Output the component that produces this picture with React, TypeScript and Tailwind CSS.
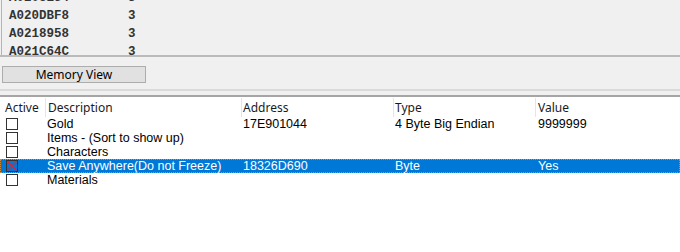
import React from "react";

const topRows = [
  ["A0208E54", "3"],
  ["A020DBF8", "3"],
  ["A0218958", "3"],
  ["A021C64C", "3"],
];

const rows = [
  { d: "Gold", a: "17E901044", t: "4 Byte Big Endian", v: "9999999" },
  { d: "Items - (Sort to show up)", a: "", t: "", v: "" },
  { d: "Characters", a: "", t: "", v: "" },
  { d: "Save Anywhere(Do not Freeze)", a: "18326D690", t: "Byte", v: "Yes", sel: true },
  { d: "Materials", a: "", t: "", v: "" },
];

export default function App() {
  return (
    <div className="w-[680px] h-[252px] bg-[#f0f0f0] flex flex-col overflow-hidden" style={{ fontFamily: "'Noto Sans', 'Liberation Sans', sans-serif" }}>
      {/* top list */}
      <div className="h-[55px] overflow-hidden ml-[1px] border-l border-[#b4b4b4] bg-[#f0f0f0]">
        <div className="mt-[-11px]">
          {topRows.map((r, i) => (
            <div key={i} className="h-[18px] flex items-center text-[12.5px] text-[#333] font-bold" style={{ fontFamily: "'Liberation Mono', 'Courier New', monospace" }}>
              <span className="w-[126px] pl-[7px]">{r[0]}</span>
              <span>{r[1]}</span>
            </div>
          ))}
        </div>
      </div>
      <div className="h-[2px] bg-[#bababa]" />
      {/* button area */}
      <div className="h-[32px] flex flex-col">
        <div className="mt-[9px] ml-[2px] w-[144px] h-[17px] bg-[#e1e1e1] border border-[#adadad] flex items-center justify-center text-[12px] text-black leading-none">
          Memory View
        </div>
      </div>
      <div className="h-[2px] bg-[#dadada]" />
      <div className="h-[4px]" />
      <div className="h-[2px] bg-[#a5a5a5]" />
      {/* bottom list */}
      <div className="flex-1 bg-white flex flex-col">
        <div className="h-[20px] flex text-[12px] text-[#1a1a1a] items-center pt-[1px]">
          <div className="w-[46px] pl-[5px] h-full flex items-center border-r border-[#e5e5e5]">Active</div>
          <div className="w-[196px] pl-[2px] h-full flex items-center border-r border-[#e5e5e5]">Description</div>
          <div className="w-[152px] pl-[1px] h-full flex items-center border-r border-[#e5e5e5]">Address</div>
          <div className="w-[142px] pl-[1px] h-full flex items-center border-r border-[#e5e5e5]">Type</div>
          <div className="flex-1 pl-[2px] h-full flex items-center">Value</div>
        </div>
        {rows.map((r, i) => (
          <div
            key={i}
            className={
              "h-[14px] flex items-center text-[12.5px] leading-none relative " +
              (r.sel ? "bg-[#0078d7] text-white" : "text-black")
            }
            style={{ fontFamily: "'Liberation Sans', Arial, sans-serif" }}
          >
            {r.sel && <div className="absolute inset-0 border border-dotted border-[#d08a3c]" />}
            <div className="w-[47px] h-full flex items-center pl-[6px]">
              <div className={"w-[12px] h-[12px] border border-[#333] relative " + (r.sel ? "bg-[#0078d7]" : "bg-white")}>
                {r.sel && (
                  <svg className="absolute left-0 top-0" width="10" height="10" viewBox="0 0 10 10">
                    <path d="M0.5 0.5 L9.5 9.5 M9.5 0.5 L0.5 9.5" stroke="#e8202a" strokeWidth="1.1" />
                  </svg>
                )}
              </div>
            </div>
            <div className="w-[195px]">{r.d}</div>
            <div className="w-[153px] pl-[1px]">{r.a}</div>
            <div className="w-[143px]">{r.t}</div>
            <div className="flex-1">{r.v}</div>
          </div>
        ))}
      </div>
    </div>
  );
}
